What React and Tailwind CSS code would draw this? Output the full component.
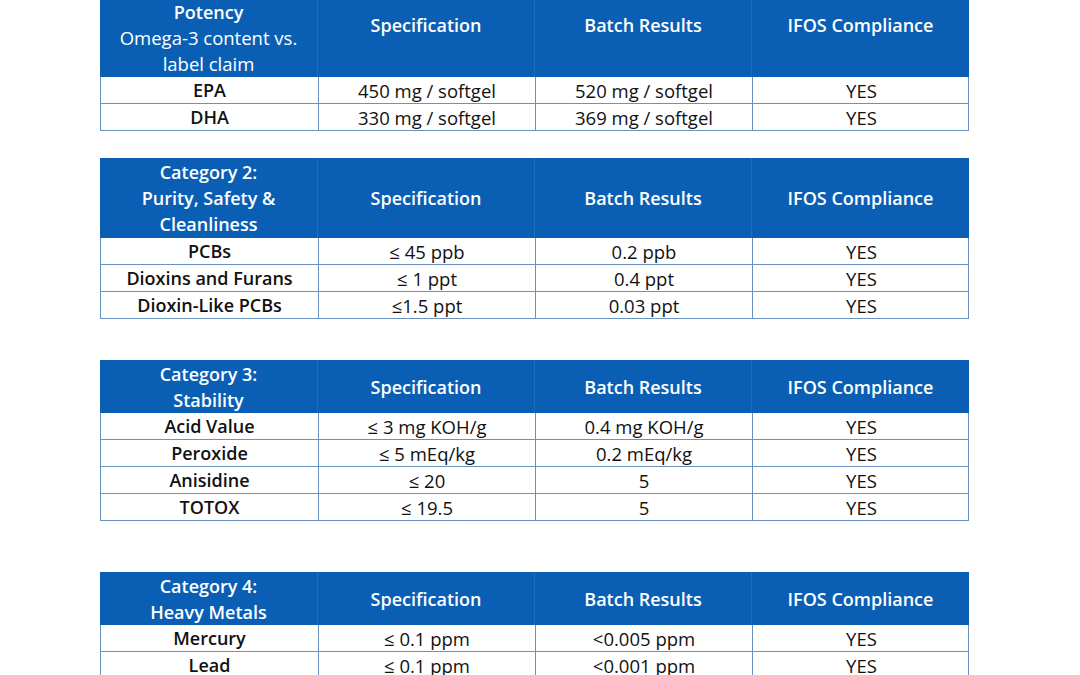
const tables = [
  {
    head: (
      <>
        Category 1:
        <br />
        Potency
        <br />
        <span className="font-normal text-[18.5px]">Omega-3 content vs.</span>
        <br />
        <span className="font-normal text-[18.5px]">label claim</span>
      </>
    ),
    headH: 'h-[104px]',
    gap: 'mt-0',
    rows: [
      ['EPA', '450 mg / softgel', '520 mg / softgel', 'YES'],
      ['DHA', '330 mg / softgel', '369 mg / softgel', 'YES'],
    ],
  },
  {
    head: (
      <>
        Category 2:
        <br />
        Purity, Safety &amp;
        <br />
        Cleanliness
      </>
    ),
    headH: 'h-[80px]',
    gap: 'mt-[27px]',
    rows: [
      ['PCBs', '≤ 45 ppb', '0.2 ppb', 'YES'],
      ['Dioxins and Furans', '≤ 1 ppt', '0.4 ppt', 'YES'],
      ['Dioxin-Like PCBs', '≤1.5 ppt', '0.03 ppt', 'YES'],
    ],
  },
  {
    head: (
      <>
        Category 3:
        <br />
        Stability
      </>
    ),
    headH: 'h-[53px]',
    gap: 'mt-[41px]',
    rows: [
      ['Acid Value', '≤ 3 mg KOH/g', '0.4 mg KOH/g', 'YES'],
      ['Peroxide', '≤ 5 mEq/kg', '0.2 mEq/kg', 'YES'],
      ['Anisidine', '≤ 20', '5', 'YES'],
      ['TOTOX', '≤ 19.5', '5', 'YES'],
    ],
  },
  {
    head: (
      <>
        Category 4:
        <br />
        Heavy Metals
      </>
    ),
    headH: 'h-[53px]',
    gap: 'mt-[51px]',
    rows: [
      ['Mercury', '≤ 0.1 ppm', '<0.005 ppm', 'YES'],
      ['Lead', '≤ 0.1 ppm', '<0.001 ppm', 'YES'],
    ],
  },
];

const cols = 'grid grid-cols-[218px_217px_217px_217px]';

function ResultTable({ t }) {
  return (
    <div className={t.gap}>
      <div className={`${cols} ${t.headH} bg-[#0a5fb4] text-white font-semibold text-[18px] text-center leading-[26px]`}>
        <div className="flex items-center justify-center border-r border-[#236db8]">
          <div>{t.head}</div>
        </div>
        <div className="flex items-center justify-center border-r border-[#236db8]">Specification</div>
        <div className="flex items-center justify-center border-r border-[#236db8]">Batch Results</div>
        <div className="flex items-center justify-center">IFOS Compliance</div>
      </div>
      <div className="border-l border-r border-[#6a92bf]">
        {t.rows.map((r) => (
          <div key={r[0]} className={`${cols} h-[27px] border-b border-[#6a92bf] text-center leading-[27px] text-[18.5px] text-[#111]`}>
            <div className="font-semibold text-[18px] border-r border-[#6a92bf]">{r[0]}</div>
            <div className="border-r border-[#6a92bf]">{r[1]}</div>
            <div className="border-r border-[#6a92bf]">{r[2]}</div>
            <div>{r[3]}</div>
          </div>
        ))}
      </div>
    </div>
  );
}

export default function App() {
  return (
    <div className="w-[1080px] h-[675px] overflow-hidden bg-white font-['Open_Sans',sans-serif]">
      <div className="ml-[100px] w-[869px] -mt-[27px]">
        {tables.map((t, i) => (
          <ResultTable key={i} t={t} />
        ))}
      </div>
    </div>
  );
}
